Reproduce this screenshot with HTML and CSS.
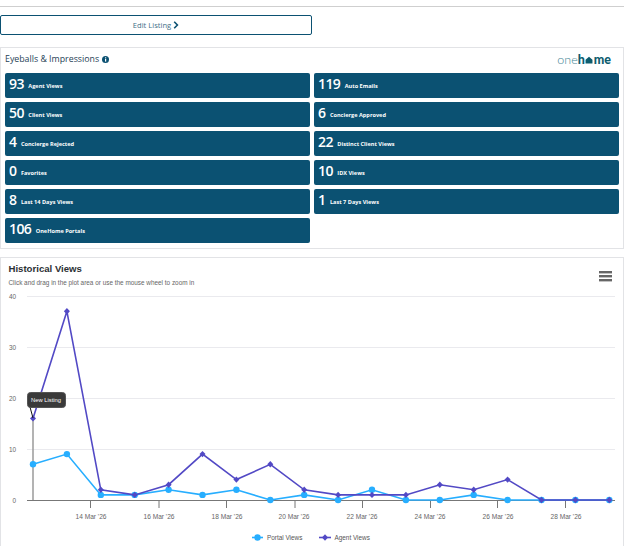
FILE: index.html
```html
<!DOCTYPE html>
<html lang="en">
<head>
<meta charset="utf-8">
<title>Listing statistics</title>
<link rel="stylesheet" href="styles.css">
</head>
<body>
<main class="page">
  <hr class="rule">
  <a class="edit-btn" href="#">Edit Listing
    <svg class="chev" width="6" height="8" viewBox="0 0 6 8"><path d="M1.2 .8 4.4 4 1.2 7.2" fill="none" stroke="#0b5172" stroke-width="1.6"/></svg>
  </a>
  <section class="card stats">
    <header class="stats-head">
      <h2 class="stats-title">Eyeballs &amp; Impressions
        <svg class="info" width="7" height="7" viewBox="0 0 7 7"><circle cx="3.5" cy="3.5" r="3.5" fill="#0b5172"/><rect x="3" y="3" width="1.2" height="2.6" fill="#fff"/><rect x="3" y="1.3" width="1.2" height="1.1" fill="#fff"/></svg>
      </h2>
      <div class="logo"><span class="logo-one">one</span><span class="logo-home">h<svg class="logo-house" width="8" height="8" viewBox="0 0 9 9"><path d="M.6 4.3 4.5.8 8.4 4.3V8.4H.6Z" fill="#0d5c6e"/></svg>me</span></div>
    </header>
    <div class="tiles">
      <div class="tile"><b class="num">93</b><span class="lbl">Agent Views</span></div>
      <div class="tile"><b class="num">119</b><span class="lbl">Auto Emails</span></div>
      <div class="tile"><b class="num">50</b><span class="lbl">Client Views</span></div>
      <div class="tile"><b class="num">6</b><span class="lbl">Concierge Approved</span></div>
      <div class="tile"><b class="num">4</b><span class="lbl">Concierge Rejected</span></div>
      <div class="tile"><b class="num">22</b><span class="lbl">Distinct Client Views</span></div>
      <div class="tile"><b class="num">0</b><span class="lbl">Favorites</span></div>
      <div class="tile"><b class="num">10</b><span class="lbl">IDX Views</span></div>
      <div class="tile"><b class="num">8</b><span class="lbl">Last 14 Days Views</span></div>
      <div class="tile"><b class="num">1</b><span class="lbl">Last 7 Days Views</span></div>
      <div class="tile"><b class="num">106</b><span class="lbl">OneHome Portals</span></div>
    </div>
  </section>
  <section class="card chart-card">
    <svg class="chart" width="622" height="289" viewBox="1 258 622 289">
      <text class="c-title" x="8.5" y="272">Historical Views</text>
      <text class="c-sub" x="8.5" y="285">Click and drag in the plot area or use the mouse wheel to zoom in</text>
      <g class="menu"><rect x="599" y="271" width="13" height="2.4"/><rect x="599" y="275" width="13" height="2.4"/><rect x="599" y="279" width="13" height="2.4"/></g>

      <g class="grid">
        <path d="M27 296.5H615M27 347.5H615M27 398.5H615M27 449.5H615"/>
      </g>
      <g class="y-lab">
        <text x="16" y="299">40</text><text x="16" y="350">30</text><text x="16" y="401">20</text><text x="16" y="452">10</text><text x="16" y="503">0</text>
      </g>
      <path class="ticks" d="M90.5 500V508M159 500V508M226.5 500V508M295 500V508M362.5 500V508M430.5 500V508M497.5 500V508M565.5 500V508"/>
      <g class="x-lab">
        <text x="91" y="518.500">14 Mar '26</text><text x="159" y="518.500">16 Mar '26</text><text x="227" y="518.500">18 Mar '26</text><text x="294" y="518.500">20 Mar '26</text><text x="362" y="518.500">22 Mar '26</text><text x="430" y="518.500">24 Mar '26</text><text x="498" y="518.500">26 Mar '26</text><text x="566" y="518.500">28 Mar '26</text>
      </g>
      <path class="flag-stem" d="M33 418V500"/>
      <path class="axis" d="M27 500.500H615"/>

      <polyline class="s-portal" points="33,464.3 66.900,454.100 100.800,494.900 134.700,494.900 168.600,489.800 202.500,494.900 236.400,489.800 270.300,500 304.200,494.900 338.100,500 372,489.800 405.900,500 439.800,500 473.700,494.900 507.600,500 541.500,500 575.400,500 609.300,500"/>
      <g class="m-portal">
        <circle cx="33" cy="464.3" r="3.2"/><circle cx="66.9" cy="454.1" r="3.2"/><circle cx="100.8" cy="494.9" r="3.2"/><circle cx="134.7" cy="494.9" r="3.2"/><circle cx="168.6" cy="489.8" r="3.2"/><circle cx="202.5" cy="494.9" r="3.2"/><circle cx="236.4" cy="489.8" r="3.2"/><circle cx="270.3" cy="500" r="3.2"/><circle cx="304.2" cy="494.9" r="3.2"/><circle cx="338.1" cy="500" r="3.2"/><circle cx="372" cy="489.8" r="3.2"/><circle cx="405.9" cy="500" r="3.2"/><circle cx="439.8" cy="500" r="3.2"/><circle cx="473.7" cy="494.9" r="3.2"/><circle cx="507.6" cy="500" r="3.2"/><circle cx="541.5" cy="500" r="3.2"/><circle cx="575.4" cy="500" r="3.2"/><circle cx="609.3" cy="500" r="3.2"/>
      </g>
      <polyline class="s-agent" points="33,418.4 66.900,311.300 100.800,489.800 134.700,494.900 168.600,484.700 202.500,454.100 236.400,479.600 270.300,464.300 304.200,489.800 338.100,494.900 372,494.900 405.900,494.900 439.800,484.700 473.700,489.800 507.600,479.600 541.500,500 575.400,500 609.300,500"/>
      <g class="m-agent">
        <path d="M33 415.200l3 3.200-3 3.200-3-3.200z"/><path d="M66.900 308.100l3 3.200-3 3.200-3-3.200z"/><path d="M100.800 486.600l3 3.200-3 3.200-3-3.200z"/><path d="M134.700 491.700l3 3.200-3 3.200-3-3.200z"/><path d="M168.600 481.500l3 3.200-3 3.200-3-3.200z"/><path d="M202.500 450.900l3 3.200-3 3.200-3-3.200z"/><path d="M236.400 476.400l3 3.200-3 3.200-3-3.200z"/><path d="M270.300 461.100l3 3.200-3 3.200-3-3.200z"/><path d="M304.200 486.600l3 3.200-3 3.200-3-3.200z"/><path d="M338.100 491.700l3 3.200-3 3.200-3-3.200z"/><path d="M372 491.700l3 3.200-3 3.200-3-3.200z"/><path d="M405.900 491.700l3 3.200-3 3.200-3-3.200z"/><path d="M439.800 481.500l3 3.200-3 3.200-3-3.200z"/><path d="M473.700 486.600l3 3.200-3 3.200-3-3.200z"/><path d="M507.600 476.400l3 3.200-3 3.200-3-3.200z"/><path d="M541.500 496.800l3 3.200-3 3.200-3-3.200z"/><path d="M575.400 496.800l3 3.200-3 3.200-3-3.200z"/><path d="M609.300 496.800l3 3.200-3 3.200-3-3.200z"/>
      </g>

      <path class="flag-link" d="M30 407 33 418"/>
      <rect class="flag-box" x="27.500" y="392.500" width="38" height="15" rx="3"/>
      <text class="flag-text" x="46" y="402">New Listing</text>

      <path class="s-portal" d="M252 537.500H263"/><circle class="leg-portal" cx="257.500" cy="537.500" r="3.200"/>
      <text class="leg-text" x="267" y="539.500">Portal Views</text>
      <path class="s-agent" d="M319 537.500H331"/><path class="leg-agent" d="M325 534.300l3 3.200-3 3.200-3-3.200z"/>
      <text class="leg-text" x="334.500" y="539.500">Agent Views</text>
    </svg>
  </section>
</main>
</body>
</html>
```
FILE: styles.css
```css
* { box-sizing: border-box; }
html, body { margin: 0; padding: 0; background: #fff; overflow: hidden; }
body { width: 634px; height: 546px; font-family: "Open Sans", "Liberation Sans", sans-serif; }
.page { width: 624px; padding-top: 6px; }
.rule { margin: 0 0 8px; border: 0; border-top: 1px solid #cfcfcf; width: 624px; }
.edit-btn {
  display: flex; align-items: center; justify-content: center; gap: 2px;
  width: 312px; height: 20px; margin-bottom: 12px;
  border: 1px solid #0b5172; border-radius: 2px;
  color: #3f6f87; font-size: 7.6px; text-decoration: none;
}
.chev { display: block; }
.card { border: 1px solid #e2e3e6; }
.stats { height: 202px; margin-bottom: 8px; padding: 0 4px; }
.stats-head { display: flex; justify-content: space-between; align-items: center; height: 25px; padding-right: 8px; }
.stats-title { margin: 0 0 3px; font-size: 8.800px; font-weight: 400; color: #1f4256; display: flex; align-items: center; gap: 3px; }
.info { display: block; }
.logo { display: flex; align-items: baseline; font-family: "Lato", sans-serif; font-size: 12.500px; line-height: 14px; margin-bottom: 1px; }
.logo-one { font-weight: 300; color: #3f8494; }
.logo-home { font-weight: 900; color: #0d5c6e; display: flex; align-items: baseline; }
.logo-house { margin: 0 .5px; }
.tiles { display: grid; grid-template-columns: 305px 305px; column-gap: 4px; grid-auto-rows: 25.2px; row-gap: 3.8px; }
.tile { display: flex; align-items: center; gap: 4.500px; padding: 0 0 4px 4px; background: #0b5172; border-radius: 2px; color: #fff; }
.num { font-size: 14px; line-height: 1; font-weight: 600; letter-spacing: -.6px; }
.lbl { font-size: 5.600px; font-weight: 700; margin-top: 4px; }
.chart-card { height: 300px; overflow: hidden; }
.chart { display: block; }
.chart text { font-family: "Liberation Sans", Arial, sans-serif; }
.c-title { font-size: 9.600px; font-weight: 700; fill: #2b2f33; }
.c-sub { font-size: 6.400px; fill: #666; }
.menu rect { fill: #666; }
.grid path { fill: none; stroke: #eaeaee; stroke-width: 1; }
.y-lab text { font-size: 6.400px; fill: #666; text-anchor: end; }
.x-lab text { font-size: 6.600px; fill: #666; text-anchor: middle; }
.ticks { fill: none; stroke: #777; stroke-width: 1; }
.axis { fill: none; stroke: #777; stroke-width: 1; }
.flag-stem { fill: none; stroke: #9a9a9a; stroke-width: 1.500; }
.flag-link { fill: none; stroke: #111; stroke-width: 1; }
.flag-box { fill: #3a3a3a; stroke: #555; stroke-width: 1; }
.flag-text { font-size: 5.800px; fill: #fff; text-anchor: middle; }
.s-portal { fill: none; stroke: #27aeff; stroke-width: 1.600; }
.s-agent { fill: none; stroke: #5249c5; stroke-width: 1.600; }
.m-portal circle, .leg-portal { fill: #27aeff; }
.m-agent path, .leg-agent { fill: #5249c5; }
.leg-text { font-size: 6.400px; fill: #555; }
```
